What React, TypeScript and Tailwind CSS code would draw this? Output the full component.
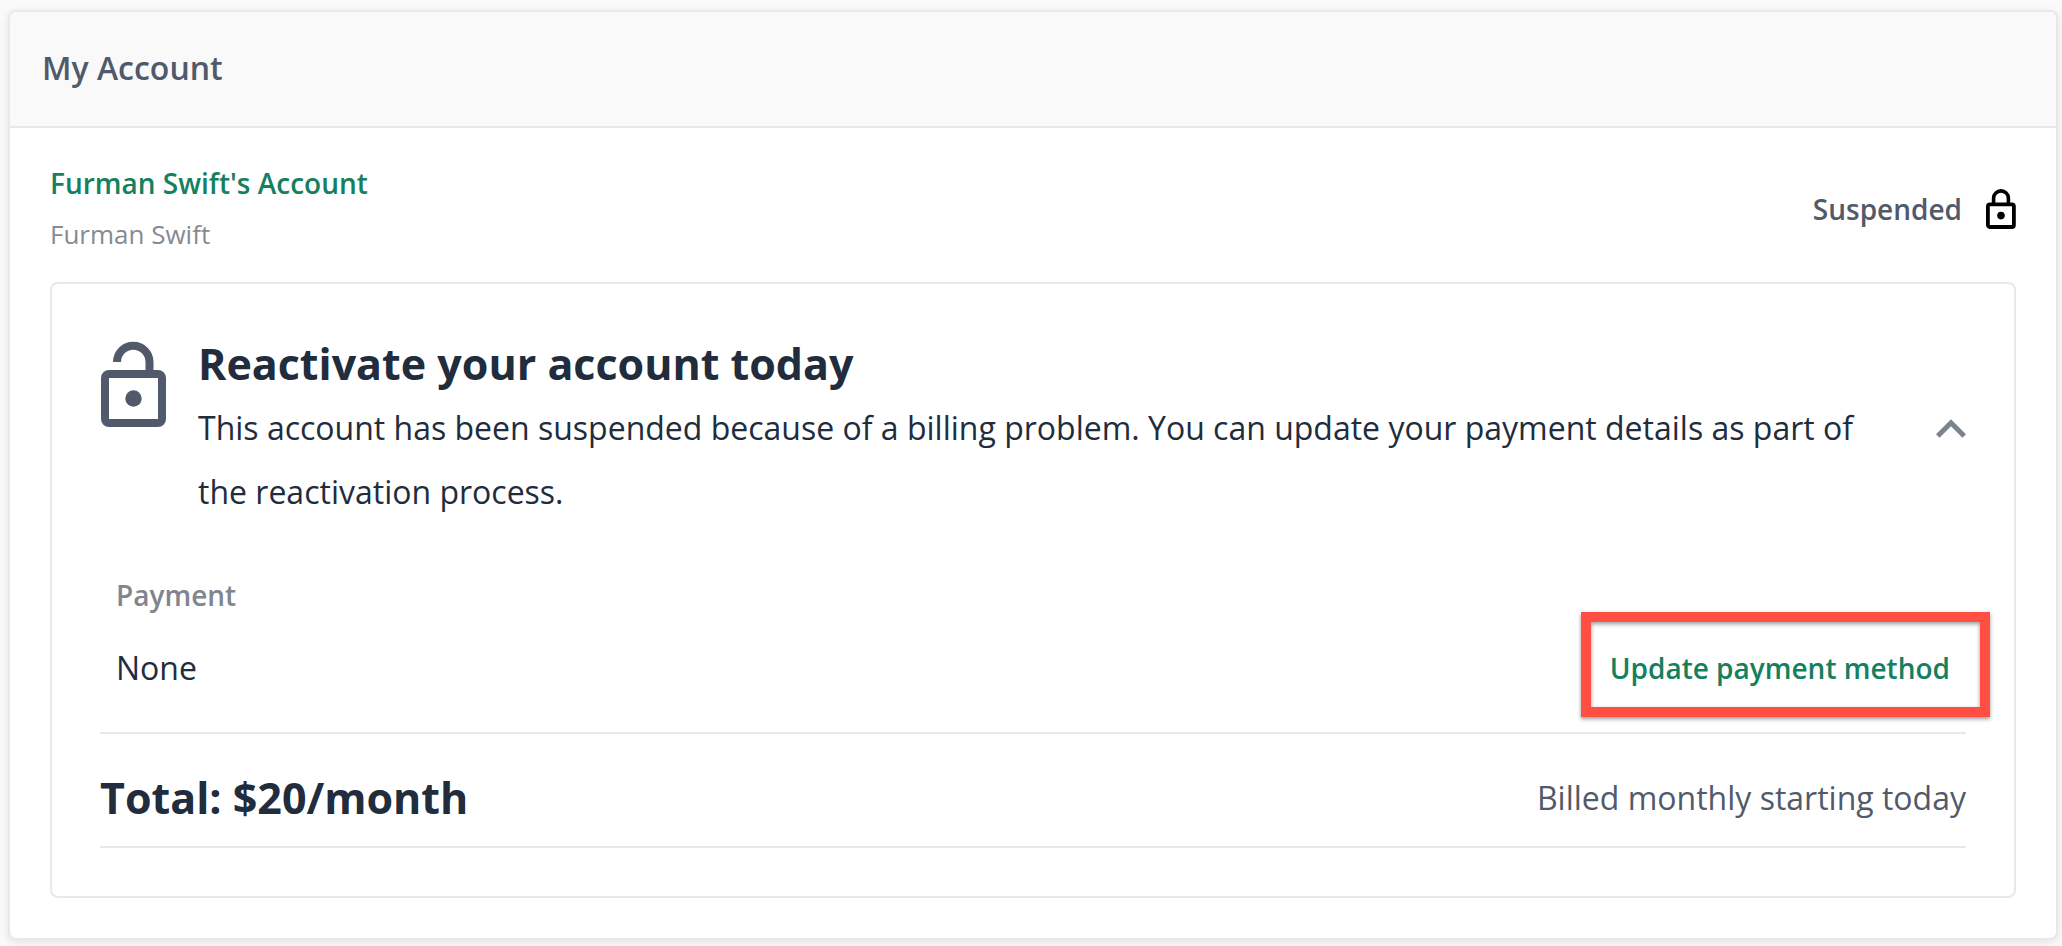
import React, { useState } from "react";

function LockIcon({ className }: { className?: string }) {
  return (
    <svg viewBox="0 0 30 40" fill="none" className={className} aria-hidden="true">
      <rect x="1.9" y="15.4" width="26" height="22.6" rx="2" stroke="currentColor" strokeWidth="3.8" />
      <path d="M7.6 15V9.3a7.4 7.4 0 0 1 14.8 0V15" stroke="currentColor" strokeWidth="3.6" />
      <circle cx="15" cy="26.6" r="3.8" fill="currentColor" />
    </svg>
  );
}

function UnlockIcon({ className }: { className?: string }) {
  return (
    <svg viewBox="0 0 66 88" fill="none" className={className} aria-hidden="true">
      <rect x="5" y="34" width="57" height="49" rx="4" stroke="currentColor" strokeWidth="8" />
      <path d="M17 22a16 16 0 0 1 32.5 0V34" stroke="currentColor" strokeWidth="8" />
      <circle cx="33.5" cy="58.5" r="8.2" fill="currentColor" />
    </svg>
  );
}

function AccountHeader() {
  return (
    <div className="mb-[22px] flex items-center justify-between">
      <div>
        <a href="#account" className="block text-[28px] leading-[50px] font-semibold text-[#15805e]">
          Furman Swift's Account
        </a>
        <p className="text-[26px] leading-[52px] text-[#868a93]">Furman Swift</p>
      </div>
      <div className="flex items-center gap-6">
        <span className="text-[28px] leading-[50px] font-semibold text-[#525a6a]">Suspended</span>
        <LockIcon className="h-10 w-[30px] text-black" />
      </div>
    </div>
  );
}

function ReactivateCard() {
  const [open, setOpen] = useState(true);

  return (
    <section className="rounded-lg border-2 border-[#e8e8ea] p-12">
      <div className="flex items-center gap-8">
        <UnlockIcon className="mt-2 h-[88px] w-[66px] shrink-0 self-start text-[#505a6b]" />
        <div className="flex-1 pr-4 text-[#212c3d]">
          <h2 className="text-[43px] leading-16 font-bold">Reactivate your account today</h2>
          <p className="text-[32px] leading-16 font-medium">
            This account has been suspended because of a billing problem. You can update your payment
            details as part of the reactivation process.
          </p>
        </div>
        <button
          type="button"
          aria-label="Toggle details"
          aria-expanded={open}
          onClick={() => setOpen(!open)}
          className="cursor-pointer text-[#7b838f]"
        >
          <svg viewBox="0 0 30 20" fill="none" className="h-5 w-[30px]" aria-hidden="true">
            <path d="M1.8 18 15 4.8 28.2 18" stroke="currentColor" strokeWidth="5" />
          </svg>
        </button>
      </div>

      {open && (
        <>
          <div className="mt-12 border-b-2 border-[#e8e8ea] px-4 pb-3.5">
            <h3 className="text-[28px] leading-[46px] font-semibold text-[#80858f]">Payment</h3>
            <div className="flex h-[100px] items-center justify-between">
              <span className="text-[32px] font-medium text-[#212c3d]">None</span>
              <button
                type="button"
                className="relative cursor-pointer text-[28px] leading-16 font-semibold text-[#15805e]"
              >
                Update payment method
                {/* highlight frame around the action */}
                <span className="pointer-events-none absolute -top-6 -right-10 -bottom-[17px] -left-[29px] border-10 border-[#ff4f42] shadow-[0_2px_4px_rgba(0,0,0,0.4),inset_0_2px_4px_rgba(0,0,0,0.4)]" />
              </button>
            </div>
          </div>
          <div className="flex items-center justify-between border-b-2 border-[#e8e8ea] pt-8 pb-4 leading-16">
            <span className="text-[43px] font-bold text-[#212c3d]">Total: $20/month</span>
            <span className="text-[32px] font-medium text-[#505a6b]">Billed monthly starting today</span>
          </div>
        </>
      )}
    </section>
  );
}

export default function App() {
  return (
    <main className="min-h-screen bg-[#fafafa] pt-2.5 pr-1 pl-2 font-['Open_Sans',sans-serif]">
      <div className="overflow-hidden rounded-lg border-2 border-[#e8e8ea] bg-white shadow-[0_2px_8px_rgba(0,0,0,0.1)]">
        <header className="border-b-2 border-[#e8e8ea] bg-[#f9f9f9] px-8 pt-8 pb-[34px]">
          <h1 className="text-[32px] leading-12 font-semibold text-[#505a6b]">My Account</h1>
        </header>
        <div className="px-10 pt-[30px] pb-10">
          <AccountHeader />
          <ReactivateCard />
        </div>
      </div>
    </main>
  );
}
